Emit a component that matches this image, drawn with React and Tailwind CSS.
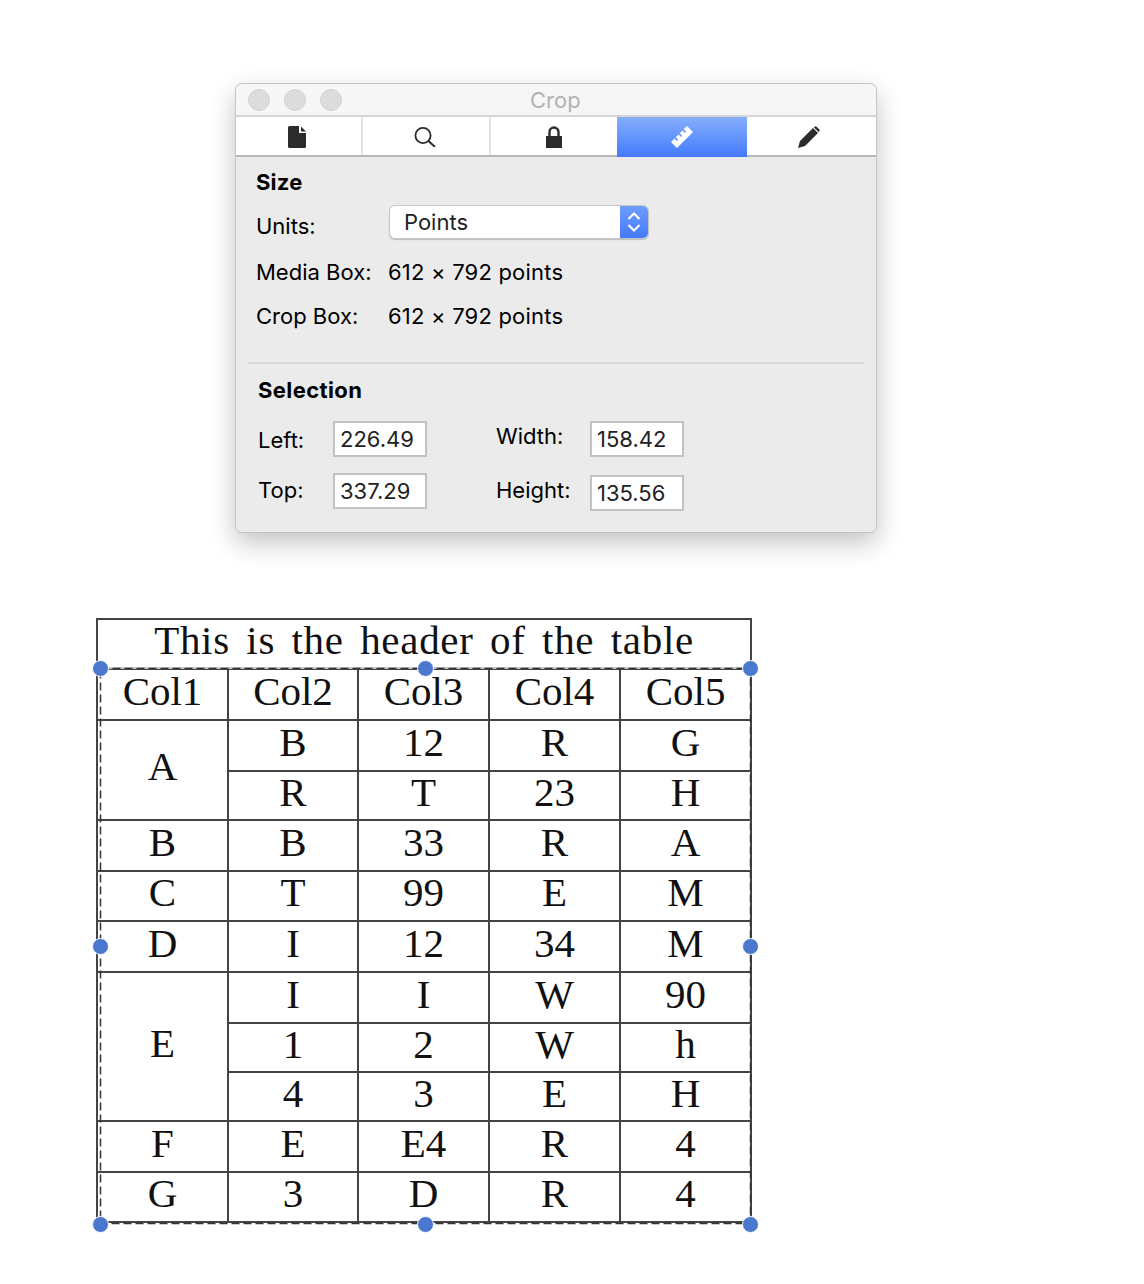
const ROWS = [
  { h: "h-[51px]", cells: [{ t: "A", span: 2 }, "B", "12", "R", "G"] },
  { h: "h-[49px]", cells: ["R", "T", "23", "H"] },
  { h: "h-[51px]", cells: ["B", "B", "33", "R", "A"] },
  { h: "h-[50px]", cells: ["C", "T", "99", "E", "M"] },
  { h: "h-[51px]", cells: ["D", "I", "12", "34", "M"] },
  { h: "h-[51px]", cells: [{ t: "E", span: 3 }, "I", "I", "W", "90"] },
  { h: "h-[49px]", cells: ["1", "2", "W", "h"] },
  { h: "h-[49px]", cells: ["4", "3", "E", "H"] },
  { h: "h-[51px]", cells: ["F", "E", "E4", "R", "4"] },
  { h: "h-[50px]", cells: ["G", "3", "D", "R", "4"] },
];

const HANDLES = [
  "left-[-4px] top-[42px]",
  "left-[321px] top-[42px]",
  "left-[646px] top-[42px]",
  "left-[-4px] top-[320px]",
  "left-[646px] top-[320px]",
  "left-[-4px] top-[598px]",
  "left-[321px] top-[598px]",
  "left-[646px] top-[598px]",
];

const cellCls = "border-2 border-[#444] text-center align-middle p-0 pb-[8px] leading-[34px]";
const fieldCls = "w-[94px] h-[36px] bg-white border-2 border-[#c2c2c2] pl-[5px] flex items-center text-[#222]";

function FileIcon() {
  return (
    <svg width="18" height="22" viewBox="0 0 18 22">
      <path d="M1.5 0H11v7h7v13.5a1.5 1.5 0 0 1-1.5 1.5h-15A1.5 1.5 0 0 1 0 20.5v-19A1.5 1.5 0 0 1 1.5 0Z" fill="#2b2b2b" />
      <path d="M13 0.5 18 5.5H13Z" fill="#2b2b2b" />
    </svg>
  );
}

function SearchIcon() {
  return (
    <svg width="22" height="20" viewBox="0 0 22 20" fill="none" stroke="#2b2b2b" strokeWidth="1.8">
      <circle cx="9" cy="8.5" r="7.6" />
      <path d="M14.5 14 21 20" strokeWidth="2" />
    </svg>
  );
}

function LockIcon() {
  return (
    <svg width="16" height="22" viewBox="0 0 16 22">
      <path d="M3.5 11V6a4.5 4.5 0 0 1 9 0v5" fill="none" stroke="#2b2b2b" strokeWidth="2.4" />
      <rect x="0" y="10" width="16" height="12" fill="#2b2b2b" />
    </svg>
  );
}

function RulerIcon() {
  return (
    <svg width="22" height="22" viewBox="0 0 22 22">
      <path
        d="M0 16 3.5 12.5 6 15 7.2 13.8 4.7 11.3 7.5 8.5 10 11 11.2 9.8 8.7 7.3 11.5 4.5 14 7 15.2 5.8 12.7 3.3 16 0 22 6 6 22Z"
        fill="#fff"
      />
    </svg>
  );
}

function PencilIcon() {
  return (
    <svg width="22" height="22" viewBox="0 0 22 22">
      <path d="M0 22 2 15 15 2 20 7 7 20Z" fill="#2b2b2b" />
      <path d="M16.5 0.8 18 0.2 21.8 4 21.2 5.5 20.6 6 16 1.4Z" fill="#2b2b2b" />
    </svg>
  );
}

function ChevronPair() {
  return (
    <svg width="14" height="22" viewBox="0 0 14 22" fill="none" stroke="#fff" strokeWidth="2">
      <path d="M1.5 8 7 2.5 12.5 8" />
      <path d="M1.5 14 7 19.5 12.5 14" />
    </svg>
  );
}

function Inspector() {
  return (
    <div className="ml-[235px] w-[642px] h-[450px] bg-[#ebebeb] rounded-[7px] border border-[#c4c4c4] shadow-[0_10px_26px_rgba(0,0,0,0.24)] overflow-hidden flex flex-col text-[22px] leading-[26px] text-black">
      {/* Title bar */}
      <div className="h-[33px] shrink-0 bg-[#f6f6f6] border-b-2 border-[#d6d6d6] flex items-center relative">
        <div className="flex gap-[14px] pl-[12px]">
          <span className="w-[22px] h-[22px] rounded-full bg-[#dcdcdc] border border-[#d2d2d2]" />
          <span className="w-[22px] h-[22px] rounded-full bg-[#dcdcdc] border border-[#d2d2d2]" />
          <span className="w-[22px] h-[22px] rounded-full bg-[#dcdcdc] border border-[#d2d2d2]" />
        </div>
        <span className="absolute left-[294px] top-[3px] text-[#b2b2b2]">Crop</span>
      </div>

      {/* Tabs */}
      <div className="h-[40px] shrink-0 bg-white border-b-2 border-[#b8b8b8] flex">
        <div className="w-[127px] border-r-2 border-[#e2e2e2] flex items-center justify-center pr-[3px] pt-[2px]"><FileIcon /></div>
        <div className="w-[128px] border-r-2 border-[#e2e2e2] flex items-center justify-center pr-[2px] pt-[2px]"><SearchIcon /></div>
        <div className="w-[126px] flex items-center justify-center pt-[2px]"><LockIcon /></div>
        <div className="w-[130px] -mb-[2px] bg-gradient-to-b from-[#86aefc] to-[#4479fd] flex items-center justify-center"><RulerIcon /></div>
        <div className="flex-1 flex items-center justify-center pr-[6px] pt-[2px]"><PencilIcon /></div>
      </div>

      {/* Size */}
      <div className="pl-[20px] pt-[12px]">
        <div className="font-bold tracking-[0.2px]">Size</div>
        <div className="flex items-start mt-[10px] h-[44px]">
          <span className="w-[133px] pt-[8px]">Units:</span>
          <div className="w-[260px] h-[34px] bg-white rounded-[6px] border border-[#c6c6c6] shadow-[0_1px_1px_rgba(0,0,0,0.2)] overflow-hidden flex items-center justify-between">
            <span className="pl-[14px] text-[#222]">Points</span>
            <span className="w-[28px] h-full bg-gradient-to-b from-[#6f9dfc] to-[#4479fd] flex items-center justify-center"><ChevronPair /></span>
          </div>
        </div>
        <div className="flex mt-[10px] h-[26px]">
          <span className="w-[132px]">Media Box:</span>
          <span className="tracking-[0.2px]">612 × 792 points</span>
        </div>
        <div className="flex mt-[18px] h-[26px]">
          <span className="w-[132px]">Crop Box:</span>
          <span className="tracking-[0.2px]">612 × 792 points</span>
        </div>
      </div>

      <div className="mx-[12px] mt-[33px] h-[2px] bg-[#d8d8d8]" />

      {/* Selection */}
      <div className="pl-[22px] pt-[13px]">
        <div className="font-bold tracking-[0.4px]">Selection</div>
        <div className="flex mt-[18px]">
          <div className="w-[238px] flex flex-col gap-[16px]">
            <div className="flex items-center">
              <span className="w-[75px] pt-[2px]">Left:</span>
              <span className={fieldCls}>226.49</span>
            </div>
            <div className="flex items-center">
              <span className="w-[75px] pb-[2px]">Top:</span>
              <span className={fieldCls}>337.29</span>
            </div>
          </div>
          <div className="flex flex-col gap-[18px]">
            <div className="flex items-center">
              <span className="w-[94px] pb-[6px]">Width:</span>
              <span className={fieldCls}>158.42</span>
            </div>
            <div className="flex items-center">
              <span className="w-[94px] pb-[6px]">Height:</span>
              <span className={fieldCls}>135.56</span>
            </div>
          </div>
        </div>
      </div>
    </div>
  );
}

function PdfTable() {
  return (
    <div className="relative ml-[96px] mt-[85px] w-[656px] text-[41px] text-[#111]" style={{ fontFamily: '"Liberation Serif", serif' }}>
      <table className="border-collapse table-fixed w-[654px]">
        <colgroup>
          <col className="w-[131px]" />
          <col className="w-[130px]" />
          <col className="w-[131px]" />
          <col className="w-[131px]" />
          <col className="w-[131px]" />
        </colgroup>
        <tbody>
          <tr className="h-[50px]">
            <td colSpan={5} className={cellCls + " whitespace-nowrap [word-spacing:5.5px] tracking-[0.7px]"}>This is the header of the table</td>
          </tr>
          <tr className="h-[51px]">
            {["Col1", "Col2", "Col3", "Col4", "Col5"].map((c) => (
              <td key={c} className={cellCls}>{c}</td>
            ))}
          </tr>
          {ROWS.map((row, i) => (
            <tr key={i} className={row.h}>
              {row.cells.map((c, j) =>
                typeof c === "object" ? (
                  <td key={j} rowSpan={c.span} className={cellCls}>{c.t}</td>
                ) : (
                  <td key={j} className={cellCls}>{c}</td>
                )
              )}
            </tr>
          ))}
        </tbody>
      </table>

      {/* Crop selection over the table */}
      <svg className="absolute left-0 top-0 pointer-events-none" width="660" height="620" fill="none">
        <path d="M4 50H655" stroke="#c4c4c4" strokeWidth="2" />
        <rect x="4.5" y="50.5" width="650" height="555" stroke="#333" strokeWidth="1.5" strokeDasharray="8 4" />
      </svg>
      {HANDLES.map((pos) => (
        <span key={pos} className={"absolute w-[17px] h-[17px] rounded-full bg-[#4a78cf] border border-white " + pos} />
      ))}
    </div>
  );
}

export default function App() {
  return (
    <div className="w-[1144px] h-[1284px] bg-white pt-[83px] overflow-hidden" style={{ fontFamily: 'Inter, "Liberation Sans", sans-serif' }}>
      <Inspector />
      <PdfTable />
    </div>
  );
}
